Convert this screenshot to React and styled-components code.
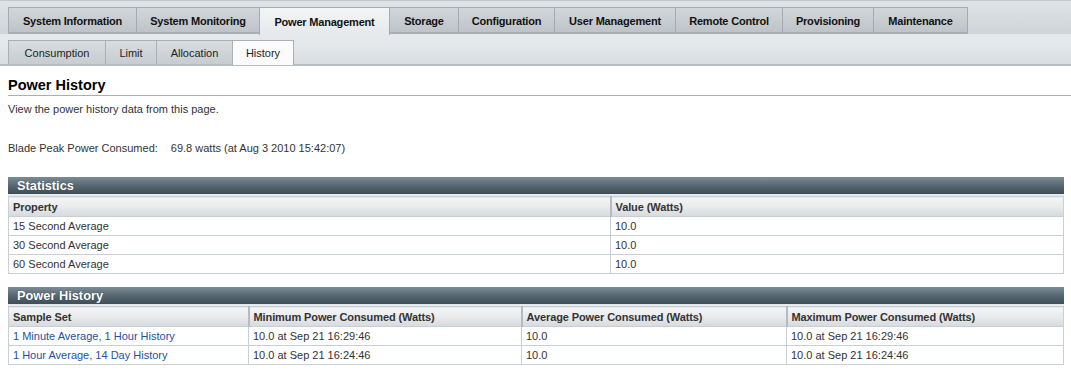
import React from "react";
import styled, { createGlobalStyle } from "styled-components";

const GlobalStyle = createGlobalStyle`
  body {
    margin: 0;
    background: #ffffff;
    font-family: "Liberation Sans", Arial, sans-serif;
    font-size: 11px;
    color: #333333;
  }
`;

const TopBand = styled.div`
  background: linear-gradient(#dfe3e6, #cfd4d8);
  padding: 6px 0 0 8px;
  display: flex;
  height: 34px;
  box-sizing: border-box;
  border-top: 1px solid #c3c8cc;
`;

const MainTab = styled.div`
  width: ${(p) => p.w}px;
  height: ${(p) => (p.active ? "28px" : "27px")};
  box-sizing: border-box;
  display: flex;
  align-items: center;
  justify-content: center;
  font-weight: bold;
  font-size: 11px;
  letter-spacing: -0.2px;
  color: #111;
  border: 1px solid #a4aaaf;
  border-bottom: none;
  margin-right: -1px;
  background: ${(p) =>
    p.active
      ? "linear-gradient(#f2f4f5, #e6e9ec)"
      : "linear-gradient(#d2d6da, #bcc2c7)"};
  box-shadow: ${(p) => (p.active ? "none" : "inset 0 -2px 0 #a9afb4")};
`;

const SubBand = styled.div`
  background: linear-gradient(#e6e9ec 0, #e6e9ec 30%, #d8dde1 100%);
  padding: 6px 0 0 8px;
  display: flex;
  height: 32px;
  box-sizing: border-box;
  border-bottom: 2px solid #b7bdc2;
`;

const SubTab = styled.div`
  width: ${(p) => p.w}px;
  height: ${(p) => (p.active ? "25px" : "24px")};
  box-sizing: border-box;
  display: flex;
  align-items: center;
  justify-content: center;
  font-size: 11px;
  color: #1e1e1e;
  border: 1px solid #a9afb4;
  border-bottom: none;
  margin-right: -1px;
  background: ${(p) =>
    p.active ? "#fbfbfb" : "linear-gradient(#d9dde0, #c6ccd0)"};
`;

const Content = styled.div`
  padding: 0 7px 0 8px;
`;

const Title = styled.h1`
  margin: 10px -7px 0 0;
  font-size: 14.5px;
  font-weight: bold;
  color: #000;
  padding-bottom: 1px;
  border-bottom: 1px solid #a8b0b7;
  line-height: 18px;
`;

const Desc = styled.p`
  margin: 7px 0 0;
  line-height: 13px;
`;

const PeakLine = styled.div`
  margin-top: 26px;
  display: flex;
  gap: 13px;
  line-height: 13px;
`;

const Section = styled.div`
  margin-top: ${(p) => p.top}px;
`;

const SectionBar = styled.div`
  height: 19px;
  box-sizing: border-box;
  background: linear-gradient(#7c8c96, #55656f 55%, #3e4e59);
  color: #ffffff;
  font-weight: bold;
  font-size: 12.8px;
  padding-left: 9px;
  display: flex;
  align-items: center;
  text-shadow: 0 0 1px #2a343a;
  border-bottom: 2px solid #e6eaed;
`;

const Table = styled.table`
  width: 100%;
  border-collapse: collapse;
  table-layout: fixed;
  border-left: 1px solid #c8cfd5;
  border-right: 1px solid #c8cfd5;
  border-bottom: 1px solid #c8cfd5;
`;

const Th = styled.th`
  text-align: left;
  font-weight: bold;
  color: #333;
  font-size: 11px;
  letter-spacing: -0.1px;
  height: 19px;
  padding: 0 0 0 4px;
  background: linear-gradient(#f4f5f6, #e8eaec 50%, #d6dadd);
  border-left: 2px solid #b4bbc1;
  border-top: 1px solid #c8cfd5;
  border-bottom: 1px solid #c8cfd5;
  &:first-child {
    border-left: none;
  }
`;

const Td = styled.td`
  height: 18px;
  padding: 0 0 0 4px;
  border-top: 1px solid #c8cfd5;
  border-left: 1px solid #c8cfd5;
  color: ${(p) => (p.link ? "#2451a3" : "#333")};
  &:first-child {
    border-left: none;
  }
`;

const mainTabs = [
  ["System Information", 129],
  ["System Monitoring", 124],
  ["Power Management", 131],
  ["Storage", 70],
  ["Configuration", 97],
  ["User Management", 122],
  ["Remote Control", 108],
  ["Provisioning", 92],
  ["Maintenance", 95],
];

const subTabs = [
  ["Consumption", 98],
  ["Limit", 52],
  ["Allocation", 77],
  ["History", 62],
];

const stats = [
  ["15 Second Average", "10.0"],
  ["30 Second Average", "10.0"],
  ["60 Second Average", "10.0"],
];

const history = [
  ["1 Minute Average, 1 Hour History", "10.0 at Sep 21 16:29:46", "10.0", "10.0 at Sep 21 16:29:46"],
  ["1 Hour Average, 14 Day History", "10.0 at Sep 21 16:24:46", "10.0", "10.0 at Sep 21 16:24:46"],
];

export default function App() {
  return (
    <>
      <GlobalStyle />
      <TopBand>
        {mainTabs.map(([name, w]) => (
          <MainTab key={name} w={w} active={name === "Power Management"}>
            {name}
          </MainTab>
        ))}
      </TopBand>
      <SubBand>
        {subTabs.map(([name, w]) => (
          <SubTab key={name} w={w} active={name === "History"}>
            {name}
          </SubTab>
        ))}
      </SubBand>
      <Content>
        <Title>Power History</Title>
        <Desc>View the power history data from this page.</Desc>
        <PeakLine>
          <span>Blade Peak Power Consumed:</span>
          <span>69.8 watts (at Aug 3 2010 15:42:07)</span>
        </PeakLine>

        <Section top={22}>
          <SectionBar>Statistics</SectionBar>
          <Table>
            <colgroup>
              <col style={{ width: 602 }} />
              <col />
            </colgroup>
            <thead>
              <tr>
                <Th>Property</Th>
                <Th>Value (Watts)</Th>
              </tr>
            </thead>
            <tbody>
              {stats.map(([k, v]) => (
                <tr key={k}>
                  <Td>{k}</Td>
                  <Td>{v}</Td>
                </tr>
              ))}
            </tbody>
          </Table>
        </Section>

        <Section top={13}>
          <SectionBar>Power History</SectionBar>
          <Table>
            <colgroup>
              <col style={{ width: 240 }} />
              <col style={{ width: 273 }} />
              <col style={{ width: 265 }} />
              <col />
            </colgroup>
            <thead>
              <tr>
                <Th>Sample Set</Th>
                <Th>Minimum Power Consumed (Watts)</Th>
                <Th>Average Power Consumed (Watts)</Th>
                <Th>Maximum Power Consumed (Watts)</Th>
              </tr>
            </thead>
            <tbody>
              {history.map((row) => (
                <tr key={row[0]}>
                  <Td link>{row[0]}</Td>
                  <Td>{row[1]}</Td>
                  <Td>{row[2]}</Td>
                  <Td>{row[3]}</Td>
                </tr>
              ))}
            </tbody>
          </Table>
        </Section>
      </Content>
    </>
  );
}
